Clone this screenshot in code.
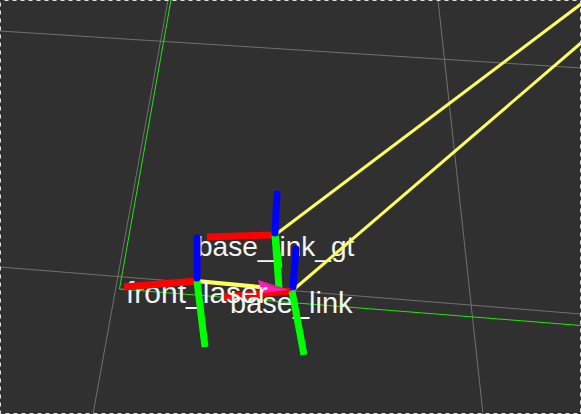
const gridLines = [
  [0, 31, 581, 68],
  [0, 267, 581, 314],
  [168, 0, 93, 414],
  [438, 0, 483, 414],
];

function Bar({ from, to, color, width = 7, cap = "butt" }) {
  return (
    <line x1={from[0]} y1={from[1]} x2={to[0]} y2={to[1]} stroke={color} strokeWidth={width} strokeLinecap={cap} />
  );
}

function Label({ x, y, size, children }) {
  return (
    <text x={x} y={y} fontSize={size} fill="#f4f4f4" className="font-['Liberation_Sans',Arial,sans-serif]">
      {children}
    </text>
  );
}

export default function App() {
  return (
    <main className="h-screen w-full overflow-hidden bg-[#303030]">
      <svg viewBox="0 0 581 414" preserveAspectRatio="xMidYMid slice" className="block h-full w-full" role="img" aria-label="Coordinate frames">
        {gridLines.map(([x1, y1, x2, y2]) => (
          <line key={`${x1}-${y1}`} x1={x1} y1={y1} x2={x2} y2={y2} stroke="#707070" />
        ))}
        <path d="M171 0 119.5 289 581 325.5" fill="none" stroke="#1fe80a" />

        <Bar from={[275, 235]} to={[581, 4]} color="#ffff5c" width={3} />
        <Bar from={[275, 235]} to={[279, 288]} color="#00ff00" />
        <Bar from={[222, 297]} to={[291, 291]} color="#ff0000" />
        <path d="M258 280 289 290 262 293Z" fill="#ff1fae" />
        <path d="M258 280 289 290 272 287Z" fill="#d91f94" />
        <Bar from={[197, 281]} to={[260, 287]} color="#ffff5c" width={4} />

        <Label x={197} y={256} size={28}>base_link_gt</Label>
        <Label x={126} y={303} size={30}>front_laser</Label>
        <Label x={230} y={313} size={29}>base_link</Label>

        <Bar from={[207, 237]} to={[275, 235]} color="#ff0000" />
        <Bar from={[275, 235]} to={[279, 268]} color="#00ff00" />
        <Bar from={[275, 233]} to={[277, 194]} color="#0000ff" cap="round" />
        <Bar from={[292, 291]} to={[581, 43]} color="#ffff5c" width={3} />
        <Bar from={[124, 287]} to={[197, 281]} color="#ff0000" />
        <Bar from={[197, 281]} to={[205, 347]} color="#00ff00" />
        <Bar from={[197, 278]} to={[197, 238]} color="#0000ff" cap="round" />
        <Bar from={[292, 291]} to={[304, 355]} color="#00ff00" />
        <Bar from={[293, 287]} to={[296, 249]} color="#0000ff" cap="round" />

        <rect x="0.5" y="0.5" width="580" height="413" fill="none" stroke="#e0e0e0" strokeDasharray="4 4" strokeDashoffset="4" />
      </svg>
    </main>
  );
}
